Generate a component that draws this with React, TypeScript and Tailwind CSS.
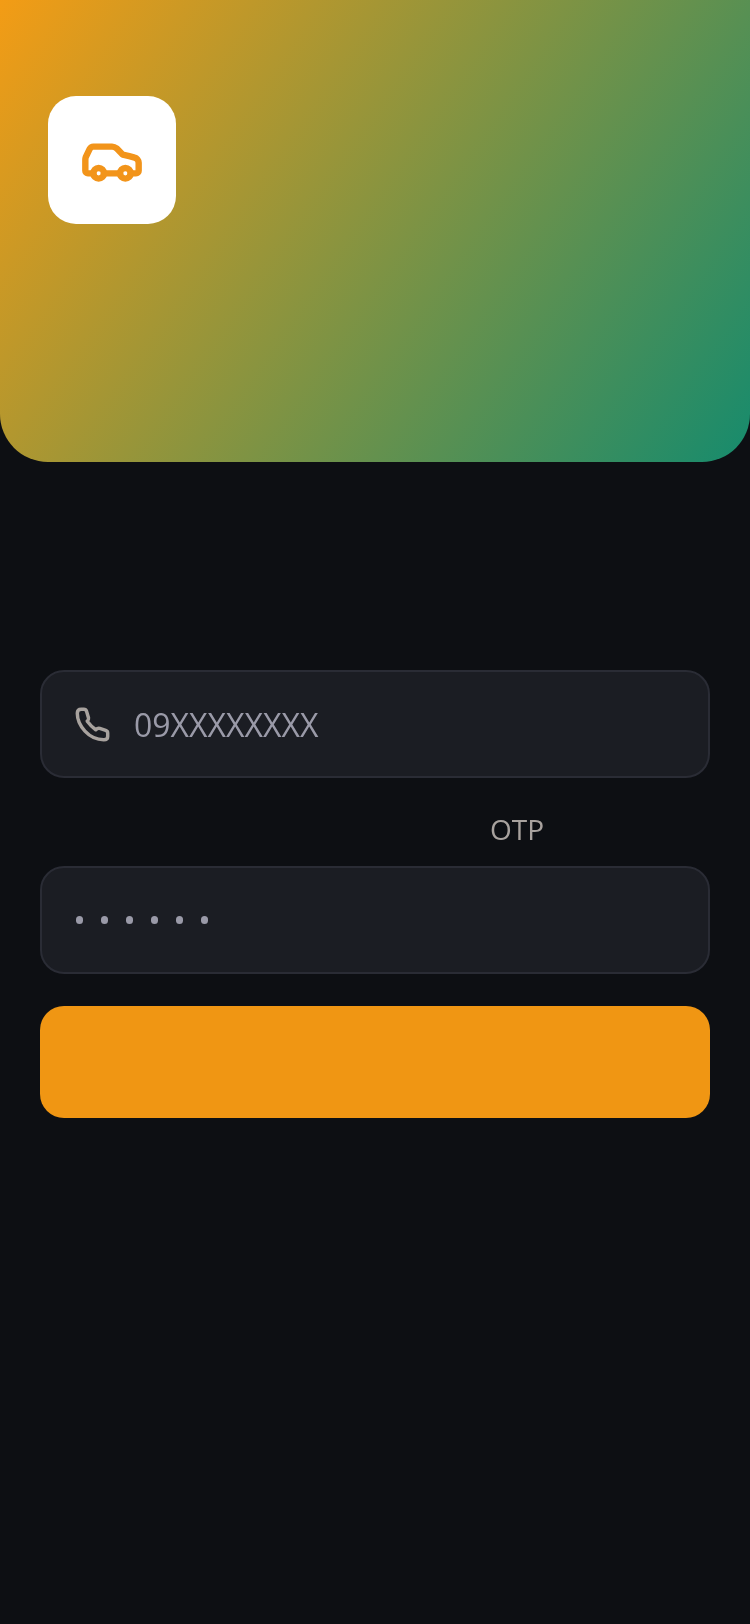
import { Car } from "lucide-react";

export default function App() {
  return (
    <div className="min-h-[1624px] w-[750px] bg-[#0d0f13] font-['Open_Sans','Noto_Sans',sans-serif]">
      <header className="h-[462px] rounded-b-[48px] bg-[linear-gradient(125deg,#f39c15,#168b6d)] pl-[48px] pt-[96px]">
        <div className="flex h-[128px] w-[128px] items-center justify-center rounded-[28px] bg-white">
          <Car size={64} strokeWidth={2.4} className="text-[#f2941a]" />
        </div>
      </header>
      <main className="flex flex-col px-[40px] pt-[208px]">
        <div className="flex h-[108px] items-center rounded-[24px] border-2 border-[#2a2c35] bg-[#1b1d23] pl-[32px]">
          <svg
            viewBox="40 46 112 112"
            width={37}
            height={37}
            fill="none"
            stroke="currentColor"
            strokeWidth={10.5}
            strokeLinejoin="round"
            className="text-[#a8a29e]"
          >
            <path d="M62 56 L70 56 Q76 56 78 62 L84 82 Q85 88 80 92 Q92 108 106 118 Q112 112 118 114 L136 120 Q142 122 142 128 L142 138 Q142 148 130 148 C85 148 50 105 50 68 Q50 56 62 56 Z" />
          </svg>
          <span className="ml-[23px] translate-y-[1px] text-[32px] text-[#9a9aa8] will-change-transform">09XXXXXXXX</span>
        </div>
        <div className="flex h-[88px] translate-y-[7px] items-center pl-[450px] text-[28px] text-[#a8a29e] will-change-transform">OTP</div>
        <div className="flex h-[108px] items-center gap-[18px] rounded-[24px] border-2 border-[#2a2c35] bg-[#1b1d23] pl-[34px]">
          {[0, 1, 2, 3, 4, 5].map((i) => (
            <span key={i} className="h-[8px] w-[7px] rounded-full bg-[#9a9aa8]" />
          ))}
        </div>
        <button className="mt-[32px] h-[112px] rounded-[24px] bg-[#f09613]" />
      </main>
    </div>
  );
}
